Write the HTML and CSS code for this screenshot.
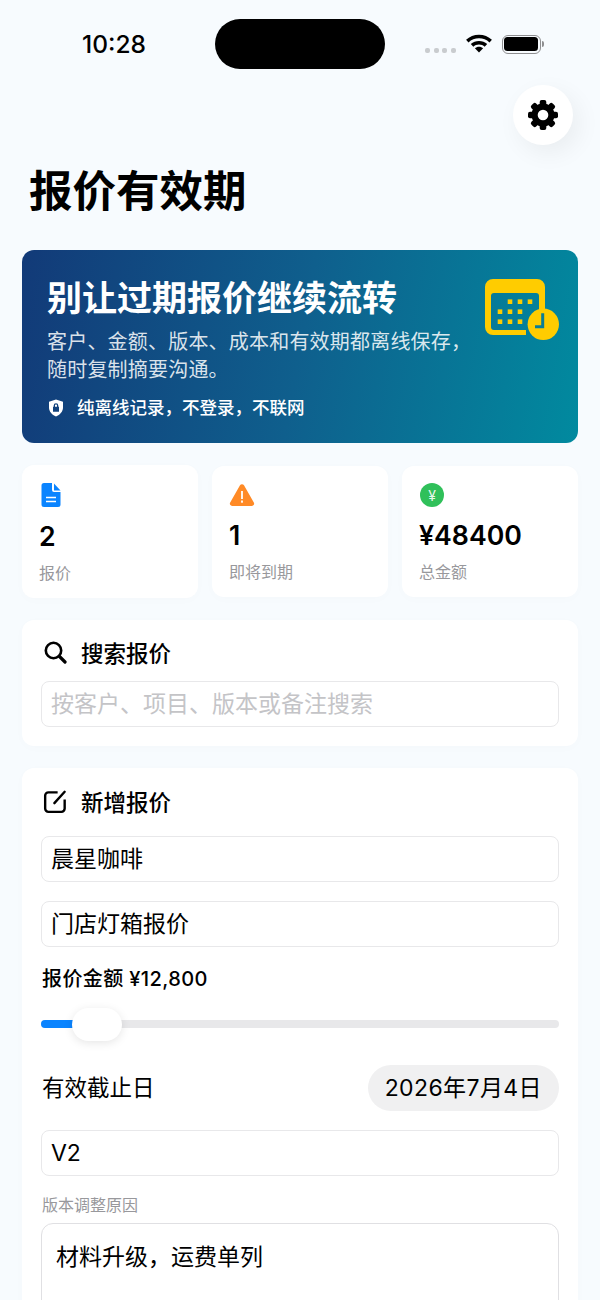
FILE: index.html
```html
<!DOCTYPE html>
<html lang="zh-CN">
  <head>
    <meta charset="UTF-8">
    <meta name="viewport" content="width=device-width, initial-scale=1.0">
    <title>报价有效期</title>
    <link rel="stylesheet" href="styles.css">
  </head>
<body>
  <div class="status-bar">
    <span class="time">10:28</span>
    <div class="island"></div>
    <div class="status-icons">
      <div class="signal"><i></i><i></i><i></i><i></i></div>
      <svg class="wifi" width="30" height="21" viewBox="0 0 28 20">
        <path d="M14 2.500c-4.700 0-9 1.800-12.300 4.900l2.300 2.500C6.700 7.400 10.200 6 14 6s7.300 1.400 10 3.900l2.300-2.500C23 4.300 18.700 2.500 14 2.500z"/>
        <path d="M14 8.500c-3 0-5.700 1.100-7.800 3l2.400 2.500c1.400-1.300 3.300-2 5.400-2s4 .7 5.400 2l2.400-2.500c-2.100-1.900-4.800-3-7.800-3z"/>
        <path d="M14 14c-1.500 0-2.900.5-3.900 1.500l3.900 4.100 3.900-4.100c-1-1-2.400-1.500-3.900-1.500z"/>
      </svg>
      <div class="battery"><div class="battery-fill"></div></div>
      <div class="battery-tip"></div>
    </div>
  </div>

  <div class="top-row">
    <div class="gear-btn">
      <svg width="32" height="32" viewBox="0 0 32 32">
        <g>
          <rect x="12.700" y="1" width="6.600" height="8" rx="2"/>
          <rect x="12.700" y="1" width="6.600" height="8" rx="2" transform="rotate(45 16 16)"/>
          <rect x="12.700" y="1" width="6.600" height="8" rx="2" transform="rotate(90 16 16)"/>
          <rect x="12.700" y="1" width="6.600" height="8" rx="2" transform="rotate(135 16 16)"/>
          <rect x="12.700" y="1" width="6.600" height="8" rx="2" transform="rotate(180 16 16)"/>
          <rect x="12.700" y="1" width="6.600" height="8" rx="2" transform="rotate(225 16 16)"/>
          <rect x="12.700" y="1" width="6.600" height="8" rx="2" transform="rotate(270 16 16)"/>
          <rect x="12.700" y="1" width="6.600" height="8" rx="2" transform="rotate(315 16 16)"/>
          <circle cx="16" cy="16" r="11.500"/>
        </g>
        <circle cx="16" cy="16" r="5.300" fill="#fff"/>
      </svg>
    </div>
  </div>

  <h1 class="page-title">报价有效期</h1>

  <div class="container">
    <section class="hero">
      <div class="hero-text">
        <h2>别让过期报价继续流转</h2>
        <p>客户、金额、版本、成本和有效期都离线保存，<br>随时复制摘要沟通。</p>
        <div class="hero-note">
          <svg width="18" height="20" viewBox="0 0 18 20">
            <path fill-rule="evenodd" fill="#fff" d="M9 1.500l7 2.300v5.700c0 4-2.900 7.200-7 9-4.100-1.800-7-5-7-9V3.800zM9 5.200a2.300 2.300 0 0 0-2.300 2.300v1.200H6v5h6v-5h-.7V7.500A2.300 2.300 0 0 0 9 5.200zm0 1.300c.6 0 1 .4 1 1v1.200H8V7.500c0-.6.4-1 1-1z"/>
          </svg>
          <span>纯离线记录，不登录，不联网</span>
        </div>
      </div>
      <svg class="hero-icon" width="76" height="64" viewBox="0 0 76 64">
        <path fill="#ffcc00" fill-rule="evenodd" d="M9 1h44a8 8 0 0 1 8 8v28h-6V18a3 3 0 0 0-3-3H10a3 3 0 0 0-3 3v31a3 3 0 0 0 3 3h32v5H9a8 8 0 0 1-8-8V9a8 8 0 0 1 8-8z"/>
        <g fill="#ffcc00">
          <rect x="23.700" y="21.400" width="4.600" height="4.600"/><rect x="33.700" y="21.400" width="4.600" height="4.600"/><rect x="43.700" y="21.400" width="4.600" height="4.600"/>
          <rect x="13.700" y="31.400" width="4.600" height="4.600"/><rect x="23.700" y="31.400" width="4.600" height="4.600"/><rect x="33.700" y="31.400" width="4.600" height="4.600"/>
          <rect x="13.700" y="41.400" width="4.600" height="4.600"/><rect x="23.700" y="41.400" width="4.600" height="4.600"/><rect x="33.700" y="41.400" width="4.600" height="4.600"/>
          <circle cx="59.300" cy="46.300" r="15.700"/>
        </g>
        <path d="M58.700 35.300v13.400H51" fill="none" stroke="#0b7d96" stroke-width="3"/>
      </svg>
    </section>

    <div class="stats">
      <div class="stat-card">
        <svg class="stat-icon doc-icon" width="20" height="26" viewBox="0 0 20 26">
          <path fill="#0a84ff" d="M3 1h8v7a2 2 0 0 0 2 2h6.500v12.500a2.500 2.500 0 0 1-2.500 2.500H3a2.500 2.500 0 0 1-2.500-2.500v-19A2.500 2.500 0 0 1 3 1z"/>
          <path fill="#0a84ff" d="M13 1.500l6.500 7H13z"/>
          <path stroke="#fff" stroke-width="1.600" d="M5 15.500h10M5 19.500h10"/>
        </svg>
        <div class="stat-value">2</div>
        <div class="stat-label">报价</div>
      </div>
      <div class="stat-card">
        <svg class="stat-icon" width="26" height="24" viewBox="0 0 26 24">
          <path fill="#ff8a26" d="M11 2.200a2.400 2.400 0 0 1 4 0l9.800 17.300a2.300 2.300 0 0 1-2 3.500H3.200a2.300 2.300 0 0 1-2-3.500z"/>
          <rect x="12.100" y="8" width="1.800" height="8" fill="#fff"/>
          <rect x="12.100" y="17.500" width="1.800" height="2.200" fill="#fff"/>
        </svg>
        <div class="stat-value">1</div>
        <div class="stat-label">即将到期</div>
      </div>
      <div class="stat-card">
        <div class="yen-icon">¥</div>
        <div class="stat-value">¥48400</div>
        <div class="stat-label">总金额</div>
      </div>
    </div>

    <section class="card search-card">
      <div class="card-title">
        <svg width="24" height="24" viewBox="0 0 24 24" fill="none" stroke="#000">
          <circle cx="10.500" cy="10.500" r="7.700" stroke-width="2.600"/>
          <path d="M16.500 16.500l5.500 5.500" stroke-width="3.200" stroke-linecap="round"/>
        </svg>
        <span>搜索报价</span>
      </div>
      <div class="field placeholder">按客户、项目、版本或备注搜索</div>
    </section>

    <section class="card">
      <div class="card-title">
        <svg class="edit-icon" width="26" height="26" viewBox="0 0 24 24" fill="none" stroke="#000" stroke-width="2.200">
          <path d="M13.500 4H5a3 3 0 0 0-3 3v12a3 3 0 0 0 3 3h12a3 3 0 0 0 3-3V10.500"/>
          <path d="M10.500 14L20 3.500" stroke-linecap="round"/>
        </svg>
        <span>新增报价</span>
      </div>
      <div class="field">晨星咖啡</div>
      <div class="field">门店灯箱报价</div>
      <div class="amount">报价金额 ¥12,800</div>
      <div class="slider">
        <div class="slider-fill"></div>
        <div class="slider-thumb"></div>
      </div>
      <div class="date-row">
        <span class="date-label">有效截止日</span>
        <span class="date-pill">2026年7月4日</span>
      </div>
      <div class="field">V2</div>
      <div class="reason-label">版本调整原因</div>
      <div class="textarea">材料升级，运费单列</div>
    </section>
  </div>
</body>
</html>
```

FILE: styles.css
```css
/* page */
html, body {
  height: 1300px;
  overflow: hidden;
}

body {
  font-family: Inter, "Noto Sans CJK SC", sans-serif;
  background-color: #f7fbfe;
  color: #000;
  margin: 0;
}

/* status bar */
.status-bar {
  display: flex;
  align-items: center;
  height: 50px;
  padding: 19px 55px 0 82px;
}

.time {
  width: 133px;
  font-size: 24.5px;
  font-weight: 500;
}

.island {
  width: 170px;
  height: 50px;
  border-radius: 25px;
  background-color: #000;
}

.status-icons {
  display: flex;
  align-items: center;
  margin-left: 40px;
}

.signal {
  display: flex;
  gap: 3.5px;
  margin-top: 12px;
  margin-right: 8px;
}

.signal i {
  width: 5px;
  height: 5px;
  border-radius: 2px;
  background-color: #c9cccf;
}

.wifi {
  margin-top: -3px;
  margin-right: 8px;
}

.battery {
  width: 39px;
  height: 19px;
  box-sizing: border-box;
  border: 1.5px solid #8e8e90;
  border-radius: 6px;
  padding: 1.5px;
}

.battery-fill {
  height: 100%;
  border-radius: 3.5px;
  background-color: #000;
}

.battery-tip {
  width: 2px;
  height: 6px;
  margin-left: 1px;
  border-radius: 0 2px 2px 0;
  background-color: #8e8e90;
}

/* gear + title */
.top-row {
  display: flex;
  justify-content: flex-end;
  padding: 16px 27px 0 0;
}

.gear-btn {
  display: flex;
  align-items: center;
  justify-content: center;
  width: 60px;
  height: 60px;
  border-radius: 50%;
  background-color: #fff;
  box-shadow: 6px 8px 24px rgba(0, 0, 0, 0.06);
}

.page-title {
  margin: 14px 0 0 29px;
  font-size: 43.5px;
  line-height: 64px;
  font-weight: 700;
}

.container {
  padding: 27px 22px 0;
}

/* hero */
.hero {
  display: flex;
  justify-content: space-between;
  height: 193px;
  box-sizing: border-box;
  padding: 27px 18px 0 25px;
  border-radius: 12px;
  color: #fff;
  background: linear-gradient(100deg, #123a78 0%, #0f5f8d 50%, #018a9f 100%);
}

.hero h2 {
  margin: 0;
  font-size: 35px;
  line-height: 42px;
  font-weight: 700;
}

.hero p {
  margin: 9px 0 0;
  font-size: 20px;
  letter-spacing: 0.2px;
  line-height: 28px;
  color: rgba(255, 255, 255, 0.86);
}

.hero-note {
  display: flex;
  align-items: center;
  gap: 12px;
  margin-top: 12px;
  font-size: 17.5px;
  font-weight: 500;
  line-height: 24px;
}

.hero-icon {
  margin-top: 1px;
}

/* stats */
.stats {
  display: flex;
  align-items: center;
  gap: 14px;
  margin-top: 22px;
}

.stat-card {
  flex: 1;
  padding: 17px 17px 15px;
  border-radius: 12px;
  background-color: #fff;
  box-shadow: 0 2px 12px rgba(0, 0, 0, 0.015);
}

.stat-icon {
  display: block;
}

.doc-icon {
  margin-left: 2px;
}

.yen-icon {
  display: flex;
  align-items: center;
  justify-content: center;
  width: 24px;
  height: 24px;
  margin: 0 0 1px 1px;
  border-radius: 50%;
  background-color: #30c05a;
  color: rgba(255, 255, 255, 0.9);
  font-size: 14px;
}

.stat-value {
  margin-top: 9px;
  font-size: 26.7px;
  line-height: 38px;
  font-weight: 600;
}

.stat-label {
  margin-top: 8px;
  font-size: 16px;
  line-height: 20px;
  color: #98989c;
}

/* cards */
.card {
  margin-top: 22px;
  padding: 18px 19px 19px;
  border-radius: 12px;
  background-color: #fff;
  box-shadow: 0 2px 12px rgba(0, 0, 0, 0.015);
}

.search-card {
  padding-top: 17px;
}

.card-title {
  display: flex;
  align-items: center;
  gap: 14px;
  height: 30px;
  padding-left: 2px;
  font-size: 22.5px;
  font-weight: 500;
}

.field {
  height: 46px;
  box-sizing: border-box;
  margin-top: 19px;
  padding-left: 9px;
  border: 1px solid #e8e8ea;
  border-radius: 8px;
  font-size: 23px;
  line-height: 45px;
}

.card-title + .field {
  margin-top: 20px;
}

.search-card .card-title + .field {
  margin-top: 14px;
}

.placeholder {
  color: #c4c4c7;
}

.edit-icon {
  margin-right: -2px;
}

.amount {
  margin-top: 19px;
  padding-left: 1px;
  font-size: 20px;
  letter-spacing: 0.4px;
  line-height: 26px;
  font-weight: 500;
}

/* slider */
.slider {
  position: relative;
  height: 8px;
  margin-top: 28px;
  border-radius: 4px;
  background-color: #e8e8ea;
}

.slider-fill {
  width: 42px;
  height: 8px;
  border-radius: 4px 0 0 4px;
  background-color: #0a84ff;
}

.slider-thumb {
  position: absolute;
  top: -12px;
  left: 31px;
  width: 50px;
  height: 33px;
  border-radius: 17px;
  background-color: #fff;
  box-shadow: 0 2px 10px rgba(0, 0, 0, 0.1);
}

.date-row {
  display: flex;
  align-items: center;
  justify-content: space-between;
  margin-top: 37px;
  padding-left: 1px;
  font-size: 23px;
}

.date-label {
  padding-bottom: 4px;
  font-size: 22.5px;
}

.date-pill {
  height: 46px;
  padding: 0 17px;
  border-radius: 23px;
  background-color: #f0f0f1;
  letter-spacing: 0.4px;
  line-height: 46px;
}

.reason-label {
  margin-top: 17px;
  padding-left: 1px;
  font-size: 16px;
  line-height: 24px;
  color: #98989c;
}

.textarea {
  height: 140px;
  margin-top: 6px;
  padding: 17px 14px;
  border: 1px solid #e0e0e3;
  border-radius: 12px;
  font-size: 23px;
  line-height: 32px;
}
```
